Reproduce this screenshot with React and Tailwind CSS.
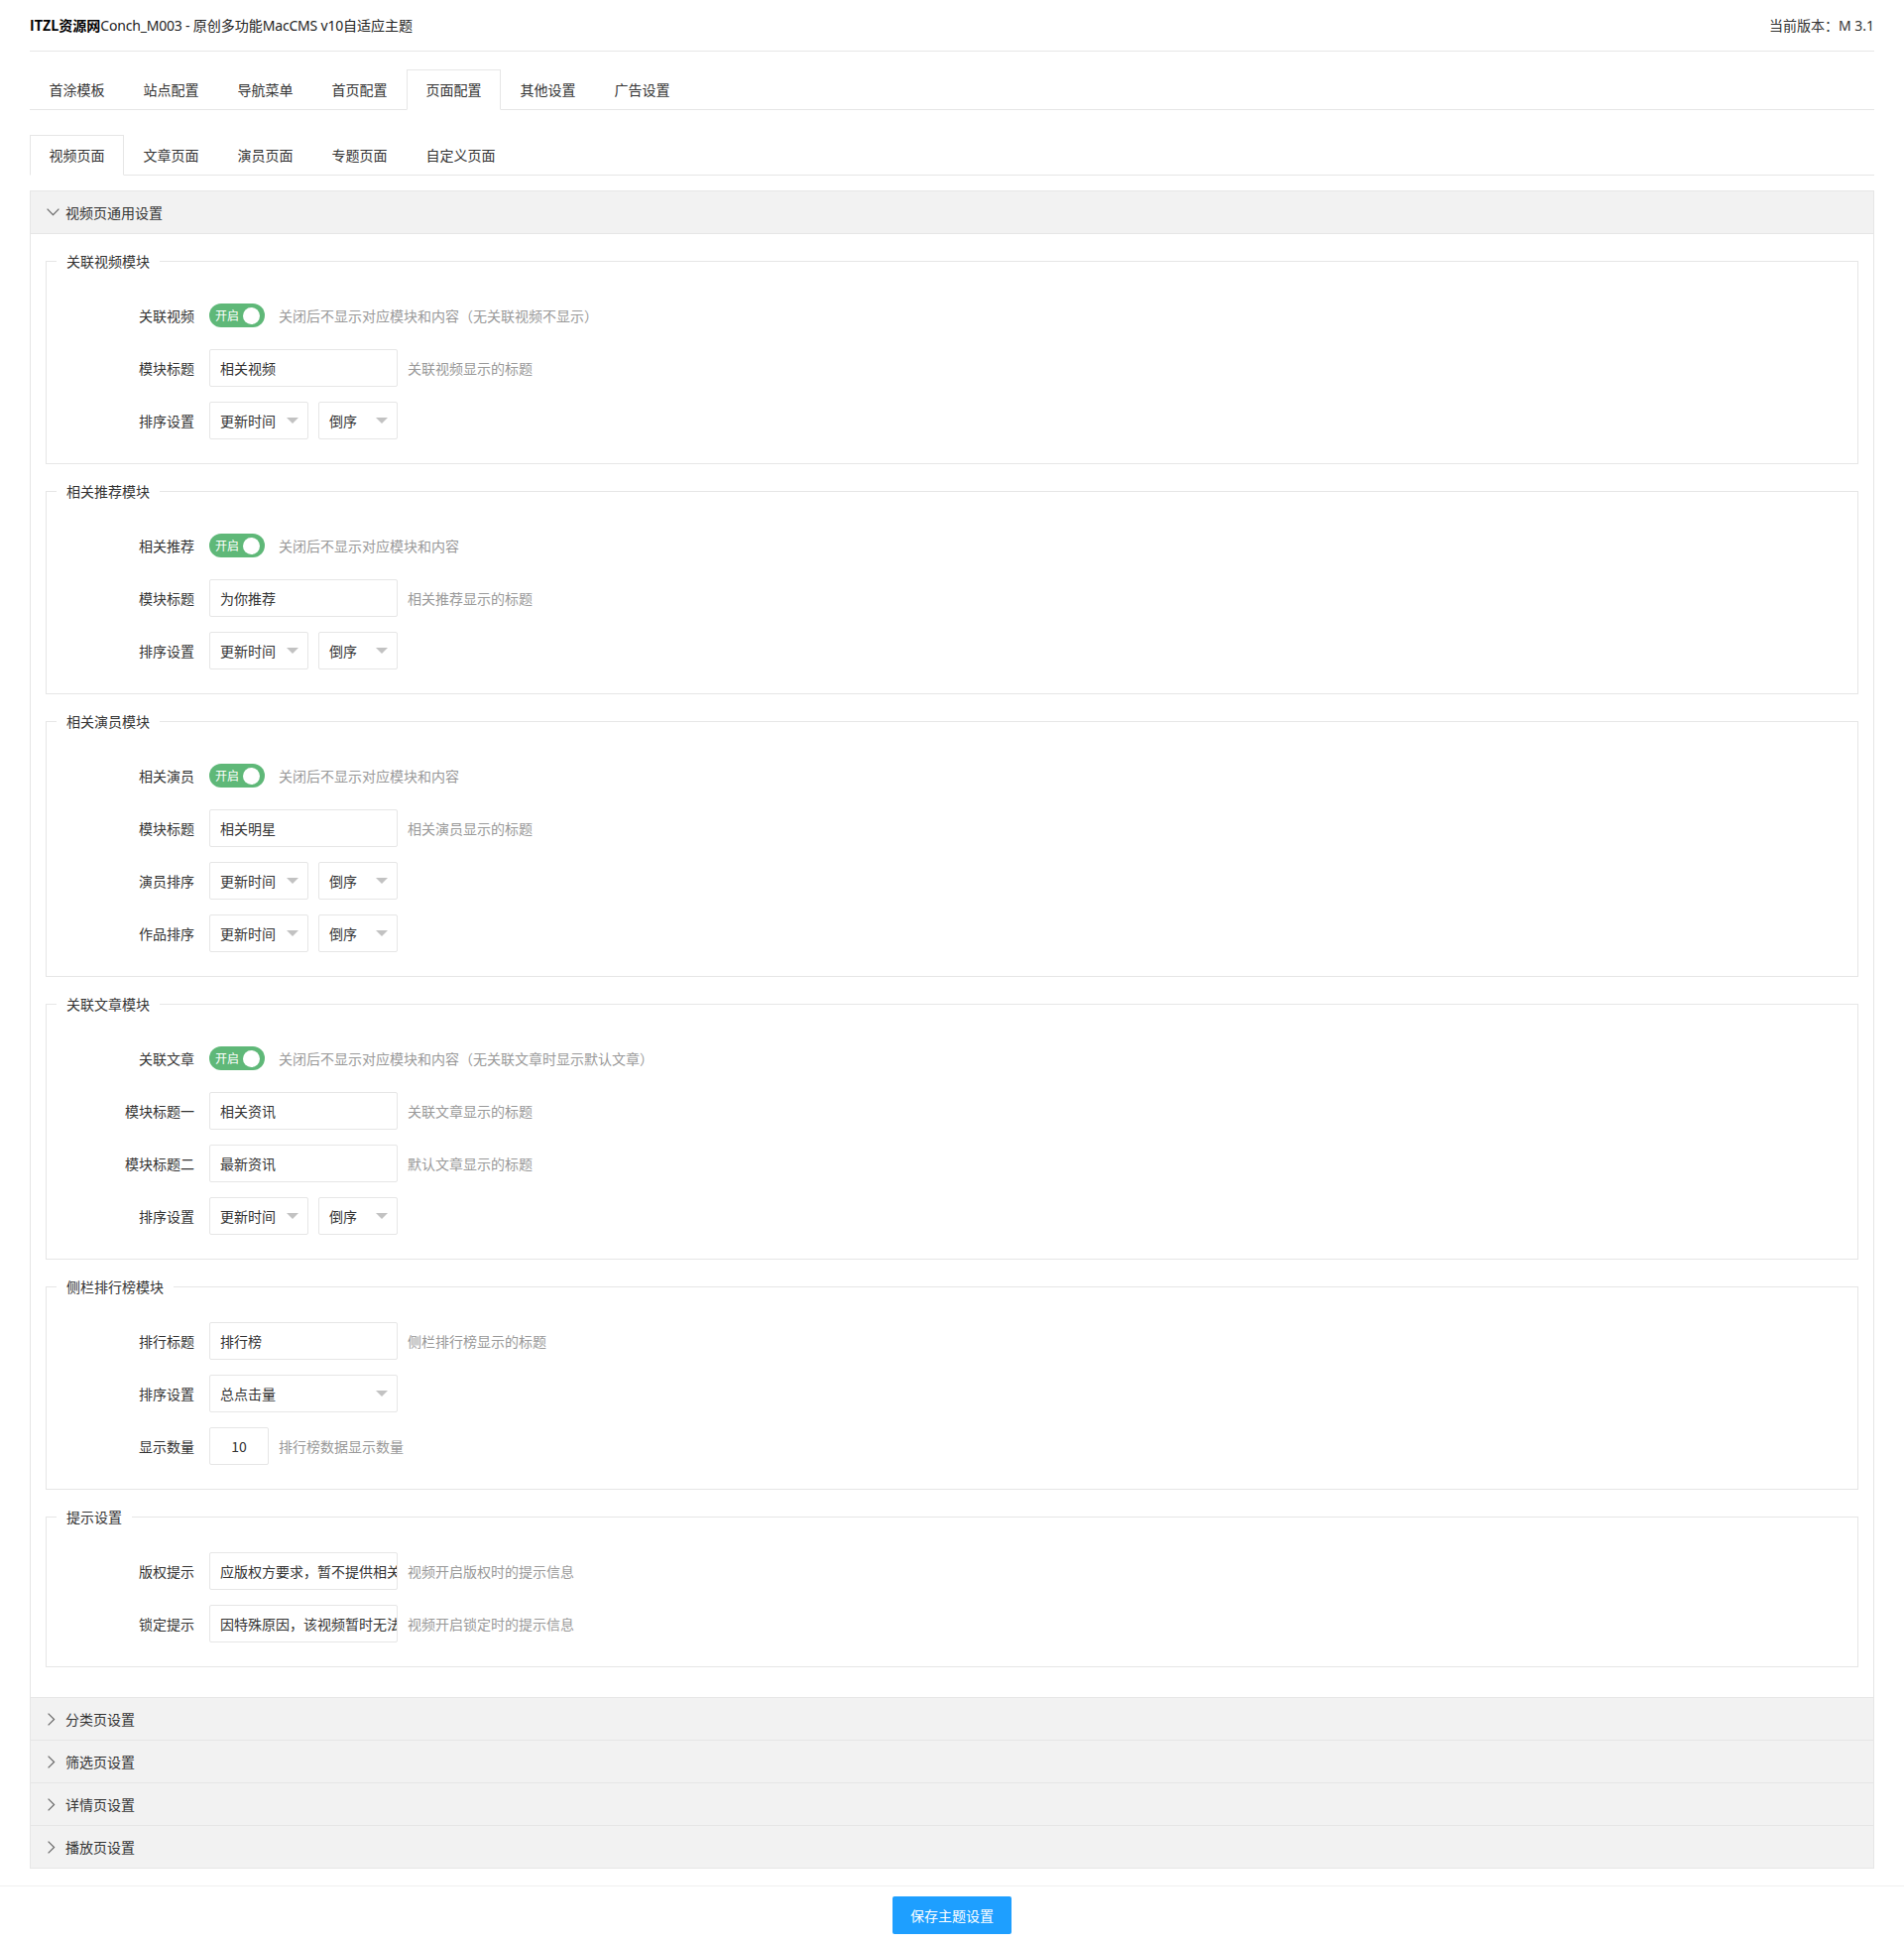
import React from "react";

function ChevronDown() {
  return (
    <svg width="13" height="8" viewBox="0 0 13 8" fill="none">
      <polyline points="0.6,0.6 6.5,6.6 12.4,0.6" stroke="#666" strokeWidth="1.2" />
    </svg>
  );
}

function ChevronRight() {
  return (
    <svg width="8" height="13" viewBox="0 0 8 13" fill="none">
      <polyline points="0.6,0.6 6.6,6.5 0.6,12.4" stroke="#666" strokeWidth="1.2" />
    </svg>
  );
}

function Label({ children }) {
  return (
    <div className="w-[164px] shrink-0 pr-[15px] text-right leading-[38px] text-[#333]">
      {children}
    </div>
  );
}

function Row({ label, children }) {
  return (
    <div className="flex h-[38px] items-center">
      <Label>{label}</Label>
      {children}
    </div>
  );
}

function Input({ value, w = "w-[190px]", center = false }) {
  return (
    <div
      className={
        "h-[38px] shrink-0 overflow-hidden whitespace-nowrap rounded-[2px] border border-[#e6e6e6] bg-white leading-[36px] text-[#333] " +
        w +
        (center ? " text-center" : " pl-[10px]")
      }
    >
      {value}
    </div>
  );
}

function Select({ value, w = "w-[100px]" }) {
  return (
    <div
      className={
        "flex h-[38px] shrink-0 items-center justify-between rounded-[2px] border border-[#e6e6e6] bg-white pl-[10px] pr-[9px] text-[#333] " +
        w
      }
    >
      <span className="leading-[36px]">{value}</span>
      <span className="h-0 w-0 border-x-[6px] border-t-[6px] border-x-transparent border-t-[#c2c2c2]" />
    </div>
  );
}

function Hint({ children, ml = "ml-[10px]" }) {
  return <div className={"whitespace-nowrap text-[#999] " + ml}>{children}</div>;
}

function Switch() {
  return (
    <div className="flex h-[24px] w-[56px] shrink-0 items-center justify-between rounded-full bg-[#5FB878] pl-[6px] pr-[5px]">
      <span className="text-[12px] leading-none text-white">开启</span>
      <span className="h-[17px] w-[17px] rounded-full bg-white" />
    </div>
  );
}

function SortRow({ label }) {
  return (
    <Row label={label}>
      <Select value="更新时间" w="w-[100px]" />
      <div className="w-[10px]" />
      <Select value="倒序" w="w-[80px]" />
    </Row>
  );
}

function Fieldset({ title, children }) {
  return (
    <div className="border border-[#e6e6e6]">
      <div className="-mt-[11px] ml-[10px] h-[20px] w-fit bg-white px-[10px] leading-[20px] text-[#333]">
        {title}
      </div>
      <div className="flex flex-col gap-[15px] pb-[24px] pt-[26px]">{children}</div>
    </div>
  );
}

function Tabs({ items, active }) {
  return (
    <div className="flex h-[41px] items-start border-b border-[#e6e6e6]">
      {items.map((t, i) =>
        i === active ? (
          <div
            key={t}
            className="relative h-[41px] border-x border-t border-b border-[#e6e6e6] border-b-white bg-white px-[18.5px] leading-[39px] text-[#333]"
          >
            {t}
          </div>
        ) : (
          <div key={t} className="h-[40px] px-[19.5px] leading-[40px] text-[#333]">
            {t}
          </div>
        )
      )}
    </div>
  );
}

function CollapsedItem({ title }) {
  return (
    <div className="flex h-[43px] items-center border-t border-[#e6e6e6] bg-[#f2f2f2] text-[#333]">
      <span className="flex w-[35px] shrink-0 pl-[17px]">
        <ChevronRight />
      </span>
      <span>{title}</span>
    </div>
  );
}

export default function App() {
  return (
    <div className="w-full bg-white font-['Noto_Sans_CJK_SC','Microsoft_YaHei',sans-serif] text-[14px] text-[#333]">
      <div className="px-[30px]">
        <div className="flex h-[52px] items-center justify-between border-b border-[#e6e6e6] pb-[1px]">
          <div className="h-[20px] overflow-hidden whitespace-nowrap leading-[20px] text-[#222]">
            <span className="font-bold text-black">ITZL资源网</span>
            <span className="font-['Noto_Sans','Noto_Sans_CJK_SC',sans-serif] tracking-[-0.2px]">Conch_M003 - </span>
            原创多功能
            <span className="font-['Noto_Sans','Noto_Sans_CJK_SC',sans-serif] tracking-[-0.2px]">MacCMS v10</span>
            自适应主题
          </div>
          <div className="h-[20px] overflow-hidden whitespace-nowrap leading-[20px] text-[#333]">
            当前版本：<span className="font-['Noto_Sans',sans-serif]">M 3.1</span>
          </div>
        </div>

        <div className="mt-[18px]">
          <Tabs
            items={["首涂模板", "站点配置", "导航菜单", "首页配置", "页面配置", "其他设置", "广告设置"]}
            active={4}
          />
        </div>

        <div className="mt-[25px]">
          <Tabs items={["视频页面", "文章页面", "演员页面", "专题页面", "自定义页面"]} active={0} />
        </div>

        <div className="mt-[15px] border border-[#e6e6e6]">
          <div className="flex h-[43px] items-center border-b border-[#e6e6e6] bg-[#f2f2f2] text-[#333]">
            <span className="flex w-[35px] shrink-0 pl-[16px]">
              <ChevronDown />
            </span>
            <span>视频页通用设置</span>
          </div>

          <div className="flex flex-col gap-[27px] px-[15px] pb-[30px] pt-[27px]">
            <Fieldset title="关联视频模块">
              <Row label="关联视频">
                <Switch />
                <Hint ml="ml-[14px]">关闭后不显示对应模块和内容（无关联视频不显示）</Hint>
              </Row>
              <Row label="模块标题">
                <Input value="相关视频" />
                <Hint>关联视频显示的标题</Hint>
              </Row>
              <SortRow label="排序设置" />
            </Fieldset>

            <Fieldset title="相关推荐模块">
              <Row label="相关推荐">
                <Switch />
                <Hint ml="ml-[14px]">关闭后不显示对应模块和内容</Hint>
              </Row>
              <Row label="模块标题">
                <Input value="为你推荐" />
                <Hint>相关推荐显示的标题</Hint>
              </Row>
              <SortRow label="排序设置" />
            </Fieldset>

            <Fieldset title="相关演员模块">
              <Row label="相关演员">
                <Switch />
                <Hint ml="ml-[14px]">关闭后不显示对应模块和内容</Hint>
              </Row>
              <Row label="模块标题">
                <Input value="相关明星" />
                <Hint>相关演员显示的标题</Hint>
              </Row>
              <SortRow label="演员排序" />
              <SortRow label="作品排序" />
            </Fieldset>

            <Fieldset title="关联文章模块">
              <Row label="关联文章">
                <Switch />
                <Hint ml="ml-[14px]">关闭后不显示对应模块和内容（无关联文章时显示默认文章）</Hint>
              </Row>
              <Row label="模块标题一">
                <Input value="相关资讯" />
                <Hint>关联文章显示的标题</Hint>
              </Row>
              <Row label="模块标题二">
                <Input value="最新资讯" />
                <Hint>默认文章显示的标题</Hint>
              </Row>
              <SortRow label="排序设置" />
            </Fieldset>

            <Fieldset title="侧栏排行榜模块">
              <Row label="排行标题">
                <Input value="排行榜" />
                <Hint>侧栏排行榜显示的标题</Hint>
              </Row>
              <Row label="排序设置">
                <Select value="总点击量" w="w-[190px]" />
              </Row>
              <Row label="显示数量">
                <Input value="10" w="w-[60px]" center />
                <Hint>排行榜数据显示数量</Hint>
              </Row>
            </Fieldset>

            <Fieldset title="提示设置">
              <Row label="版权提示">
                <Input value="应版权方要求，暂不提供相关" />
                <Hint>视频开启版权时的提示信息</Hint>
              </Row>
              <Row label="锁定提示">
                <Input value="因特殊原因，该视频暂时无法" />
                <Hint>视频开启锁定时的提示信息</Hint>
              </Row>
            </Fieldset>
          </div>

          <CollapsedItem title="分类页设置" />
          <CollapsedItem title="筛选页设置" />
          <CollapsedItem title="详情页设置" />
          <CollapsedItem title="播放页设置" />
        </div>
      </div>

      <div className="mt-[17px] flex justify-center border-t border-[#f0f0f0] pb-[10px] pt-[10px]">
        <button className="h-[38px] rounded-[2px] bg-[#1E9FFF] px-[18px] text-[14px] text-white">
          保存主题设置
        </button>
      </div>
    </div>
  );
}
